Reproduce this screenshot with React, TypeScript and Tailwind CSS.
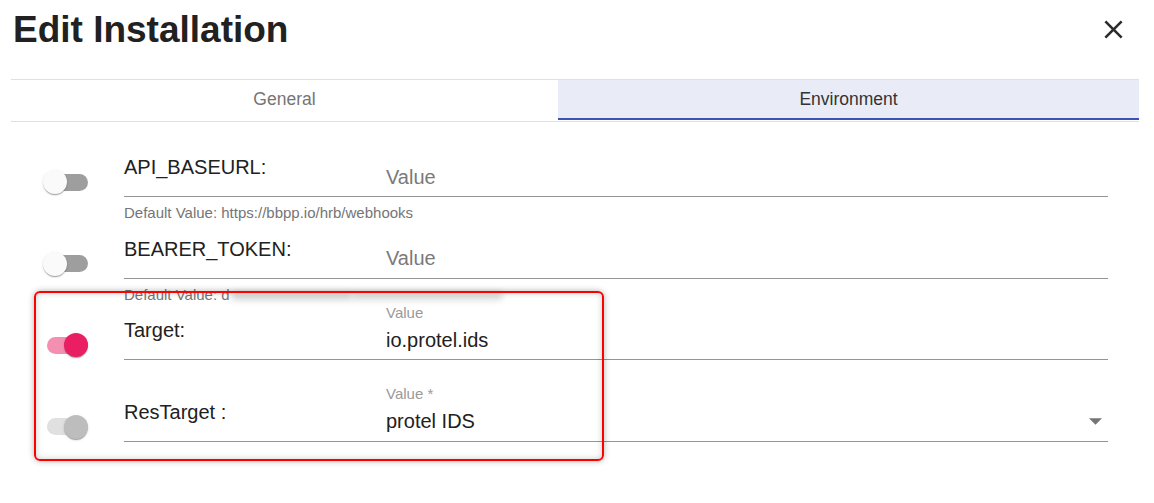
type ToggleState = "off" | "on" | "disabled";

function Toggle({ state }: { state: ToggleState }) {
  const track =
    state === "on" ? "bg-[#f48fb1]" : state === "disabled" ? "bg-[#e0e0e0]" : "bg-[#9e9e9e]";
  const thumb =
    state === "on"
      ? "right-0 bg-[#e91e63]"
      : state === "disabled"
        ? "right-0 bg-[#bdbdbd]"
        : "left-0 bg-[#fafafa]";
  return (
    <div className="relative w-[45px] h-[24px] shrink-0">
      <div className={`absolute left-[4px] right-0 top-[3.5px] h-[17px] rounded-full ${track}`} />
      <div
        className={`absolute top-0 w-[24px] h-[24px] rounded-full shadow-[0_2px_1px_-1px_rgba(0,0,0,0.2),0_1px_1px_0_rgba(0,0,0,0.14),0_1px_3px_0_rgba(0,0,0,0.12)] ${thumb}`}
      />
    </div>
  );
}

type Row = {
  label: string;
  toggle: ToggleState;
  value?: string;
  floating?: string;
  select?: boolean;
  helper?: React.ReactNode;
};

const rows: Row[] = [
  {
    label: "API_BASEURL:",
    toggle: "off",
    helper: "Default Value: https://bbpp.io/hrb/webhooks",
  },
  {
    label: "BEARER_TOKEN:",
    toggle: "off",
    helper: (
      <>
        Default Value: d
        <span className="inline-block align-middle ml-[2px] w-[120px] h-[8px] bg-[#d4d4d4] blur-[3px]" />
        <span className="inline-block align-middle w-[150px] h-[8px] bg-[#dadada] blur-[3px]" />
      </>
    ),
  },
  { label: "Target:", toggle: "on", value: "io.protel.ids", floating: "Value" },
  { label: "ResTarget :", toggle: "disabled", value: "protel IDS", floating: "Value *", select: true },
];

function EnvRow({ row }: { row: Row }) {
  return (
    <div className="h-[81.5px]">
      <div className="h-[60px] flex items-end">
        <div className="ml-[32px] mb-[3px]">
          <Toggle state={row.toggle} />
        </div>
        <div className="ml-[36px] mr-[31px] flex-1 h-full flex items-end border-b border-[#949494]">
          <div className="w-[262px] pb-[17px] text-[20px] leading-[24px] text-[#212121]">{row.label}</div>
          <div className="flex-1 flex flex-col pb-[7.5px]">
            {row.value ? (
              <>
                <span className="text-[15px] leading-[18px] text-[#9a9a9a] mb-[6px]">{row.floating}</span>
                <span className="text-[20px] leading-[24px] text-[#212121]">{row.value}</span>
              </>
            ) : (
              <span className="text-[20px] leading-[24px] text-[#7a7a7a]">Value</span>
            )}
          </div>
          {row.select && (
            <svg width="13" height="7" viewBox="0 0 10 5" className="mb-[16px] mr-[6px] fill-[#757575]">
              <path d="M0 0l5 5 5-5z" />
            </svg>
          )}
        </div>
      </div>
      {row.helper && (
        <div className="ml-[113px] pt-[7px] text-[15px] leading-[18px] text-[#757575] whitespace-nowrap">
          {row.helper}
        </div>
      )}
    </div>
  );
}

export default function App() {
  return (
    <div className="relative w-[1154px] h-[503px] overflow-hidden bg-white pl-[11px] pr-[15px] font-['Liberation_Sans',Arial,sans-serif]">
      <header className="h-[79px] flex items-start justify-between">
        <h1 className="pt-[8px] ml-[2px] text-[37px] leading-[44px] font-bold text-[#212121]">Edit Installation</h1>
        <svg width="31" height="31" viewBox="0 0 24 24" className="mt-[13.5px] mr-[10.5px] fill-[#2b2b2b]">
          <path d="M19 6.41L17.59 5 12 10.59 6.41 5 5 6.41 10.59 12 5 17.59 6.41 19 12 13.41 17.59 19 19 17.59 13.41 12z" />
        </svg>
      </header>

      <nav className="border-y border-[#e0e0e0]">
        <div className="flex h-[40px] mb-[1px] text-[17.5px]">
          <div className="w-[547px] flex items-center justify-center text-[#757575] pb-[1px]">General</div>
          <div className="flex-1 flex items-center justify-center bg-[#e9ecf7] border-b-2 border-[#3f51b5] text-[#333] pt-[1px]">
            Environment
          </div>
        </div>
      </nav>

      <section className="pt-[15px]">
        {rows.map((r) => (
          <EnvRow key={r.label} row={r} />
        ))}
      </section>

      <div className="absolute left-[34px] top-[291px] w-[570px] h-[170px] rounded-[6px] border-2 border-[#ff0000] shadow-[0_0_6px_rgba(0,0,0,0.3),inset_0_0_6px_rgba(0,0,0,0.2)] pointer-events-none" />
    </div>
  );
}
